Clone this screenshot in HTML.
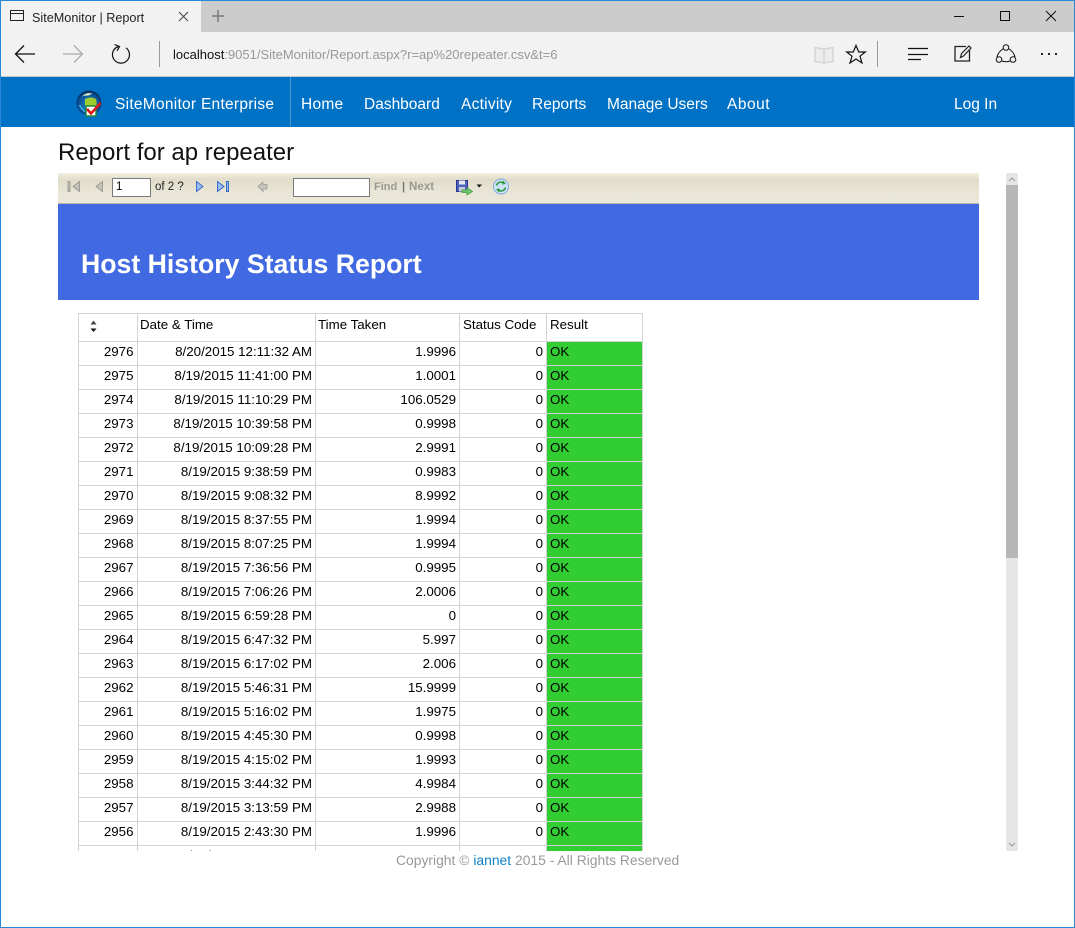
<!DOCTYPE html>
<html><head><meta charset="utf-8"><title>SiteMonitor | Report</title>
<style>
html,body{margin:0;padding:0;width:1075px;height:928px;overflow:hidden;background:#fff;font-family:"Liberation Sans",sans-serif}
.a{position:absolute;white-space:nowrap}
svg{position:absolute;overflow:visible}
.nav{top:95px;font-size:15.5px;line-height:20px;color:#fff}
table{position:absolute;left:78px;top:313px;border-collapse:collapse;table-layout:fixed;width:565px;font:13.33px/15px "Liberation Sans",sans-serif;color:#000}
td{border:1px solid #d3d3d3;height:23px;padding:0 3px 4px 3px;text-align:right;box-sizing:border-box;white-space:nowrap;overflow:hidden}
td:first-child{padding-right:3.500px}
tr{height:24px}
tr.h{height:28px}
tr.h td{text-align:left;height:28px;vertical-align:top;padding:3px 0 0 3px}
tr.h td.l{padding-left:2px}
td.g{background:#32cd32;text-align:left;padding-bottom:5px}
</style></head>
<body>
<div class="a" style="left:0;top:0;width:1075px;height:32px;background:#ccc"></div>
<div class="a" style="left:0;top:0;width:201px;height:32px;background:#f2f2f2"></div>
<div class="a" style="left:0;top:32px;width:1075px;height:44px;background:#f2f2f2"></div>
<div class="a" style="left:0;top:76px;width:1075px;height:1px;background:#c8c8c8"></div>
<svg style="left:0;top:0" width="1075" height="77" fill="none" stroke="#000" stroke-width="1">
<rect x="10.5" y="10.5" width="13" height="10" stroke="#222"/><path d="M10 13.5H24" stroke="#222"/>
<path d="M179 12L188 21M188 12L179 21" stroke="#444"/>
<path d="M218 10V22M212 16H224" stroke="#777" stroke-width="1.4"/>
<path d="M16 54H35M24 45.500L15.500 54L24 62.500" stroke="#111" stroke-width="1.3"/>
<path d="M63 54H82M74 45.500L82.500 54L74 62.500" stroke="#aaa" stroke-width="1.3"/>
<path d="M118.500 46.500A8.500 8.500 0 1 0 126 47.800" stroke="#111" stroke-width="1.2"/><path d="M114.500 44.500L119.500 46.500L117 51" stroke="#111" stroke-width="1.2"/>
<path d="M159.500 41V67" stroke="#999"/>
<path d="M877.500 41V67" stroke="#999"/>
<path d="M815 47.500L824 49V63L815 61.500ZM833 47.500L824 49V63L833 61.500Z" stroke="#d4d4d4" stroke-width="1.500" fill="#ececec"/>
<path d="M856 45.500L858.700 52H865.300L860 56.200L862 63L856 59L850 63L852 56.200L846.700 52H853.300Z" stroke="#111" stroke-width="1.200"/>
<path d="M908 48.500H928M908 54.500H928M908 59.500H921" stroke="#111" stroke-width="1.200"/>
<path d="M966 46.500H955V61H969.500V50" stroke="#222" stroke-width="1.300"/><path d="M960.500 57.500L961.500 53.500L969 46L971 48L963.500 56Z" stroke="#222" stroke-width="1.200"/>
<circle cx="1006" cy="47.500" r="2.800" stroke="#111"/><circle cx="999" cy="59.500" r="2.800" stroke="#111"/><circle cx="1013" cy="59.500" r="2.800" stroke="#111"/>
<path d="M1003.500 48.500Q998 52 997 57M1008.500 48.500Q1014 52 1015 57M1002 61Q1006 62.500 1010 61" stroke="#111"/>
<path d="M954 16.500H964" stroke="#111"/><rect x="1000.500" y="11.500" width="9" height="9" stroke="#111"/><path d="M1046 11L1056 21M1056 11L1046 21" stroke="#111"/>
<g fill="#222" stroke="none"><rect x="1041" y="53" width="2" height="2"/><rect x="1048" y="53" width="2" height="2"/><rect x="1055" y="53" width="2" height="2"/></g>
</svg>
<div class="a" style="left:32px;top:10px;font-size:12.65px;line-height:16px;color:#222">SiteMonitor | Report</div>
<div class="a" style="left:173px;top:47px;font-size:13px;line-height:16px;color:#999"><span style="color:#111">localhost</span>:9051/SiteMonitor/Report.aspx?r=ap%20repeater.csv&amp;t=6</div>

<div class="a" style="left:0;top:77px;width:1075px;height:50px;background:#0072c6"></div>
<div class="a" style="left:290px;top:77px;width:1px;height:50px;background:#4a97d4"></div>
<svg style="left:76px;top:90px" width="30" height="30">
<defs><radialGradient id="gl" cx=".5" cy=".55" r=".6"><stop offset="0" stop-color="#1f8fd0"/><stop offset=".7" stop-color="#0a4f98"/><stop offset="1" stop-color="#021a34"/></radialGradient></defs>
<circle cx="13" cy="13" r="12.500" fill="url(#gl)"/><path d="M6 6.500Q10 2 16 3.500Q13 6 10 5.500Q8 5.500 6 6.500Z" fill="#e4efc0"/><path d="M9 9Q15 6 20 9Q22 15 18 20Q12 20 9 15Z" fill="#9ccc2e"/><path d="M3.500 15Q6 19.500 9 21.500" stroke="#3fb8e8" stroke-width="1.500" fill="none"/>
<rect x="10" y="16" width="10" height="10" fill="#fff" stroke="#1e8a3c" stroke-width="1.500"/><path d="M11 19L15 23.500L24.500 13" fill="none" stroke="#e01818" stroke-width="2.500"/>
</svg>
<div class="a nav" style="left:115px;letter-spacing:.27px">SiteMonitor Enterprise</div>
<div class="a nav" style="left:301px;letter-spacing:.25px">Home</div>
<div class="a nav" style="left:364px">Dashboard</div>
<div class="a nav" style="left:461px;letter-spacing:.25px">Activity</div>
<div class="a nav" style="left:532px">Reports</div>
<div class="a nav" style="left:607px">Manage Users</div>
<div class="a nav" style="left:727px;letter-spacing:.5px">About</div>
<div class="a nav" style="left:954px">Log In</div>

<div class="a" style="left:58px;top:138px;font-size:24px;line-height:30px;color:#111">Report for ap repeater</div>

<div class="a" style="left:58px;top:173px;width:960px;height:678px;overflow:hidden">
<div class="a" style="left:0;top:0;width:921px;height:30px;background:linear-gradient(#f3f0e4 0,#e0dcc8 22%,#e8e5d6 60%,#ebe8da 100%)"></div>
<div class="a" style="left:0;top:30px;width:921px;height:1px;background:#b9b6a6"></div>
<div class="a" style="left:0;top:31px;width:921px;height:96px;background:#4169e1"></div>
<div class="a" style="left:23px;top:74px;font-size:26.67px;line-height:34px;font-weight:bold;color:#fff">Host History Status Report</div>
<div class="a" style="left:948px;top:0;width:12px;height:678px;background:#e6e6e6"></div>
<div class="a" style="left:948px;top:12px;width:12px;height:373px;background:#b7b7b7"></div>
<svg style="left:948px;top:0" width="12" height="678" fill="none" stroke="#999"><path d="M3 8L6 5L9 8"/><path d="M3 670L6 673L9 670"/></svg>
</div>

<svg style="left:60px;top:175px" width="460" height="25">
<g fill="#c4c4bc" stroke="#8f8f88" stroke-width=".8"><path d="M8 6.500H10V16.500H8Z"/><path d="M19.500 6.500V16.500L13 11.500Z"/><path d="M42.500 6.500V16.500L36 11.500Z"/></g>
<g fill="#9dbcf0" stroke="#2a64c8" stroke-width=".9"><path d="M136.500 6.500V16.500L143 11.500Z"/><path d="M157.500 6.500V16.500L164 11.500Z"/><path d="M166.500 6.500H168.500V16.500H166.500Z"/></g>
<path d="M198 11.500L203 7V9.500H207V14H203V16.500Z" fill="#c4c4bc" stroke="#9a9a92" stroke-width=".8"/>
<rect x="396.500" y="5.500" width="11" height="11" fill="#4a62c0" stroke="#27368a"/><rect x="399" y="5.500" width="6" height="4" fill="#e8e8f0"/><rect x="399" y="12" width="6" height="4.500" fill="#c8c8d8"/>
<path d="M402 15H407V12.500L412.500 16.500L407 20V17.500H402Z" fill="#6cc46c" stroke="#3d9a3d" stroke-width=".7"/>
<path d="M416.500 9.500H422L419.250 12.500Z" fill="#111"/>
<circle cx="441" cy="11.500" r="7.500" fill="#cfe2f8" stroke="#7fa8dc"/><path d="M436.500 10.500A4.800 4.800 0 0 1 444 8M445.500 12.500A4.800 4.800 0 0 1 438 15" fill="none" stroke="#2c9a3a" stroke-width="1.600"/><path d="M443 5.500L446 9L442 9.500Z" fill="#2c9a3a"/><path d="M439 17.500L436 14L440 13.500Z" fill="#2c9a3a"/>
</svg>
<div class="a" style="left:112px;top:178px;width:39px;height:19px;box-sizing:border-box;border:1px solid #7a7a7a;background:#fff;font-size:11.5px;line-height:17px;padding-left:3px;color:#000">1</div>
<div class="a" style="left:155px;top:180px;font-size:11.5px;line-height:14px;color:#222">of 2 ?</div>
<div class="a" style="left:293px;top:178px;width:77px;height:19px;box-sizing:border-box;border:1px solid #7a7a7a;background:#fff"></div>
<div class="a" style="left:374px;top:180px;font-size:11px;line-height:14px;font-weight:bold;color:#9a9a92">Find</div>
<div class="a" style="left:402px;top:180px;font-size:11px;line-height:14px;font-weight:bold;color:#77776f">|</div>
<div class="a" style="left:409px;top:180px;font-size:11.6px;line-height:14px;font-weight:bold;color:#9a9a92">Next</div>

<div class="a" style="left:58px;top:173px;width:921px;height:678px;overflow:hidden;pointer-events:none">
<table style="left:20px;top:140px">
<colgroup><col style="width:59px"><col style="width:178px"><col style="width:144px"><col style="width:87px"><col style="width:96px"></colgroup>
<tr class="h"><td class="l"></td><td class="l">Date &amp; Time</td><td class="l">Time Taken</td><td>Status Code</td><td>Result</td></tr>
<tr><td>2976</td><td>8/20/2015 12:11:32 AM</td><td>1.9996</td><td>0</td><td class="g">OK</td></tr>
<tr><td>2975</td><td>8/19/2015 11:41:00 PM</td><td>1.0001</td><td>0</td><td class="g">OK</td></tr>
<tr><td>2974</td><td>8/19/2015 11:10:29 PM</td><td>106.0529</td><td>0</td><td class="g">OK</td></tr>
<tr><td>2973</td><td>8/19/2015 10:39:58 PM</td><td>0.9998</td><td>0</td><td class="g">OK</td></tr>
<tr><td>2972</td><td>8/19/2015 10:09:28 PM</td><td>2.9991</td><td>0</td><td class="g">OK</td></tr>
<tr><td>2971</td><td>8/19/2015 9:38:59 PM</td><td>0.9983</td><td>0</td><td class="g">OK</td></tr>
<tr><td>2970</td><td>8/19/2015 9:08:32 PM</td><td>8.9992</td><td>0</td><td class="g">OK</td></tr>
<tr><td>2969</td><td>8/19/2015 8:37:55 PM</td><td>1.9994</td><td>0</td><td class="g">OK</td></tr>
<tr><td>2968</td><td>8/19/2015 8:07:25 PM</td><td>1.9994</td><td>0</td><td class="g">OK</td></tr>
<tr><td>2967</td><td>8/19/2015 7:36:56 PM</td><td>0.9995</td><td>0</td><td class="g">OK</td></tr>
<tr><td>2966</td><td>8/19/2015 7:06:26 PM</td><td>2.0006</td><td>0</td><td class="g">OK</td></tr>
<tr><td>2965</td><td>8/19/2015 6:59:28 PM</td><td>0</td><td>0</td><td class="g">OK</td></tr>
<tr><td>2964</td><td>8/19/2015 6:47:32 PM</td><td>5.997</td><td>0</td><td class="g">OK</td></tr>
<tr><td>2963</td><td>8/19/2015 6:17:02 PM</td><td>2.006</td><td>0</td><td class="g">OK</td></tr>
<tr><td>2962</td><td>8/19/2015 5:46:31 PM</td><td>15.9999</td><td>0</td><td class="g">OK</td></tr>
<tr><td>2961</td><td>8/19/2015 5:16:02 PM</td><td>1.9975</td><td>0</td><td class="g">OK</td></tr>
<tr><td>2960</td><td>8/19/2015 4:45:30 PM</td><td>0.9998</td><td>0</td><td class="g">OK</td></tr>
<tr><td>2959</td><td>8/19/2015 4:15:02 PM</td><td>1.9993</td><td>0</td><td class="g">OK</td></tr>
<tr><td>2958</td><td>8/19/2015 3:44:32 PM</td><td>4.9984</td><td>0</td><td class="g">OK</td></tr>
<tr><td>2957</td><td>8/19/2015 3:13:59 PM</td><td>2.9988</td><td>0</td><td class="g">OK</td></tr>
<tr><td>2956</td><td>8/19/2015 2:43:30 PM</td><td>1.9996</td><td>0</td><td class="g">OK</td></tr>
<tr><td>2955</td><td>8/19/2015 2:13:30 PM</td><td>1.999</td><td>0</td><td class="g">OK</td></tr>
</table>
</div>
<svg style="left:88px;top:321px" width="12" height="14"><path d="M2.500 3.500L5.500 -0.500L8.500 3.500Z" fill="#444"/><path d="M2.500 7.500L5.500 11L8.500 7.500Z" fill="#111"/></svg>

<div class="a" style="left:396px;top:852px;font-size:13.88px;line-height:17px;color:#999">Copyright © <span style="color:#0f7fc4">iannet</span> 2015 - All Rights Reserved</div>

<div class="a" style="left:0;top:0;width:1075px;height:1px;background:#2b88d8"></div>
<div class="a" style="left:0;top:927px;width:1075px;height:1px;background:#2b88d8"></div>
<div class="a" style="left:0;top:0;width:1px;height:928px;background:#2b88d8"></div>
<div class="a" style="left:1074px;top:0;width:1px;height:928px;background:#2b88d8"></div>
</body></html>
